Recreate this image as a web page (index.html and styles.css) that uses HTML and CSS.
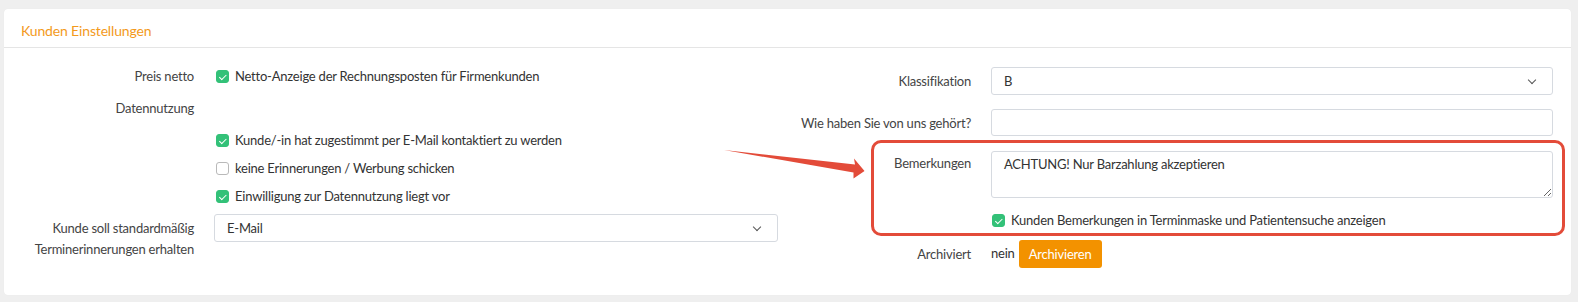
FILE: index.html
```html
<!DOCTYPE html>
<html lang="de">
<head>
<meta charset="utf-8">
<title>Kunden Einstellungen</title>
<link rel="stylesheet" href="styles.css">
</head>
<body>
<div class="page">
  <div class="card">
    <div class="card-head"><span class="title">Kunden Einstellungen</span></div>
    <div class="card-body">
      <div class="col col-left">
        <div class="row r1">
          <div class="label">Preis netto</div>
          <div class="ctrl"><label class="check"><span class="box on"></span>Netto-Anzeige der Rechnungsposten für Firmenkunden</label></div>
        </div>
        <div class="row r2">
          <div class="label">Datennutzung</div>
          <div class="ctrl"></div>
        </div>
        <div class="row r3">
          <div class="label"></div>
          <div class="ctrl"><label class="check"><span class="box on"></span>Kunde/-in hat zugestimmt per E-Mail kontaktiert zu werden</label></div>
        </div>
        <div class="row r4">
          <div class="label"></div>
          <div class="ctrl"><label class="check"><span class="box"></span>keine Erinnerungen / Werbung schicken</label></div>
        </div>
        <div class="row r5">
          <div class="label"></div>
          <div class="ctrl"><label class="check"><span class="box on"></span>Einwilligung zur Datennutzung liegt vor</label></div>
        </div>
        <div class="row r6">
          <div class="label two">Kunde soll standardmäßig<br>Terminerinnerungen erhalten</div>
          <div class="ctrl"><div class="select">E-Mail<span class="chev"></span></div></div>
        </div>
      </div>
      <div class="col col-right">
        <div class="row q1">
          <div class="label">Klassifikation</div>
          <div class="ctrl"><div class="select">B<span class="chev"></span></div></div>
        </div>
        <div class="row q2">
          <div class="label">Wie haben Sie von uns gehört?</div>
          <div class="ctrl"><div class="input"></div></div>
        </div>
        <div class="row q3">
          <div class="label">Bemerkungen</div>
          <div class="ctrl"><textarea class="textarea">ACHTUNG! Nur Barzahlung akzeptieren</textarea></div>
        </div>
        <div class="row q4">
          <div class="label"></div>
          <div class="ctrl"><label class="check"><span class="box on"></span>Kunden Bemerkungen in Terminmaske und Patientensuche anzeigen</label></div>
        </div>
        <div class="row q5">
          <div class="label">Archiviert</div>
          <div class="ctrl inline"><span class="nein">nein</span><button class="btn">Archivieren</button></div>
        </div>
      </div>
    </div>
    <div class="highlight"></div>
    <svg class="arrow" width="150" height="40" viewBox="720 145 150 40">
      <polygon points="724,150 855,164.5 854,158.5 864.5,171 853.5,178.5 853.5,172.5" fill="#e34b39"/>
    </svg>
  </div>
</div>
</body>
</html>
```
FILE: styles.css
```css
* { box-sizing: border-box; }
html, body { margin: 0; padding: 0; }
body {
  background: #efefef;
  font-family: "Lato", "Noto Sans", sans-serif;
  font-size: 13px;
  letter-spacing: -0.22px;
  color: #3a3a3a;
}
.page {
  padding: 9px 7px 7px 4px;
}
.card {
  position: relative;
  background: #fff;
  border-radius: 4px;
  height: 286px;
  box-shadow: 0 0 1px rgba(0,0,0,0.06);
}
.card-head {
  height: 39px;
  padding: 4px 0 0 17px;
  display: flex;
  align-items: center;
  border-bottom: 1px solid #e5e5e5;
}
.title {
  color: #f39a1c;
  font-size: 14px;
  letter-spacing: -0.15px;
}
.card-body {
  display: flex;
}
.col-left { width: 783px; padding-top: 18px; }
.col-right { flex: 1; padding-top: 19px; }
.row {
  display: grid;
  column-gap: 20px;
  align-items: start;
}
.col-left .row { grid-template-columns: 190px 564px; }
.col-right .row { grid-template-columns: 184px 562px; }
.label {
  text-align: right;
  line-height: 20px;
  color: #444;
}
.r1, .r2, .r3, .r4, .r5 { height: 20px; }
.r2 { margin-top: 12px; }
.r3 { margin-top: 12px; }
.r4 { margin-top: 8px; }
.r5 { margin-top: 8px; }
.r6 { margin-top: 8px; }
.label.two { padding-top: 4px; line-height: 21px; }

.check {
  display: flex;
  align-items: center;
  height: 20px;
  gap: 6px;
  color: #333;
  white-space: nowrap;
}
.box {
  width: 13px;
  height: 13px;
  border-radius: 3px;
  border: 1px solid #b9b9b9;
  background: #fff;
  flex: none;
  position: relative;
}
.col-left .check { margin-left: 2px; }
.col-right .check { margin-left: 1px; }
.box.on {
  background: #33c178;
  border-color: #33c178;
}
.box.on::after {
  content: "";
  position: absolute;
  left: 3.5px;
  top: 2px;
  width: 3px;
  height: 5.5px;
  border: solid #fff;
  border-width: 0 1.6px 1.6px 0;
  transform: rotate(45deg);
}

.select, .input {
  position: relative;
  height: 28px;
  border: 1px solid #d6dae0;
  border-radius: 3px;
  padding-left: 12px;
  line-height: 26px;
  color: #333;
  background: #fff;
}
.input { height: 27px; }
.chev {
  position: absolute;
  right: 17px;
  top: 9px;
  width: 6px;
  height: 6px;
  border: solid #555;
  border-width: 0 1.5px 1.5px 0;
  transform: rotate(45deg);
}
.q1 .label, .q2 .label { line-height: 28px; }
.q2 { margin-top: 14px; }
.q3 { margin-top: 14px; }
.q3 .label { padding-top: 2px; }
.textarea {
  display: block;
  width: 562px;
  height: 47px;
  border: 1px solid #d6dae0;
  border-radius: 3px;
  padding: 2px 12px;
  font-family: inherit;
  font-size: 13px;
  letter-spacing: -0.22px;
  line-height: 20px;
  color: #333;
  resize: vertical;
  margin: 0;
}
.q4 { margin-top: 12px; }
.q5 { margin-top: 10px; }
.q5 .label { line-height: 28px; }
.inline {
  display: flex;
  align-items: center;
  height: 28px;
}
.nein { color: #333; margin-right: 4px; position: relative; top: -1px; }
.btn {
  height: 28px;
  width: 83px;
  border: 0;
  border-radius: 3px;
  background: #f39200;
  color: #fff;
  font-family: inherit;
  font-size: 13px;
  letter-spacing: -0.22px;
  padding: 0;
}

.highlight {
  position: absolute;
  left: 867px;
  top: 131px;
  width: 694px;
  height: 96px;
  border: 3px solid #e34b39;
  border-radius: 10px;
  pointer-events: none;
}
.arrow {
  position: absolute;
  left: 716px;
  top: 136px;
  pointer-events: none;
}
```
